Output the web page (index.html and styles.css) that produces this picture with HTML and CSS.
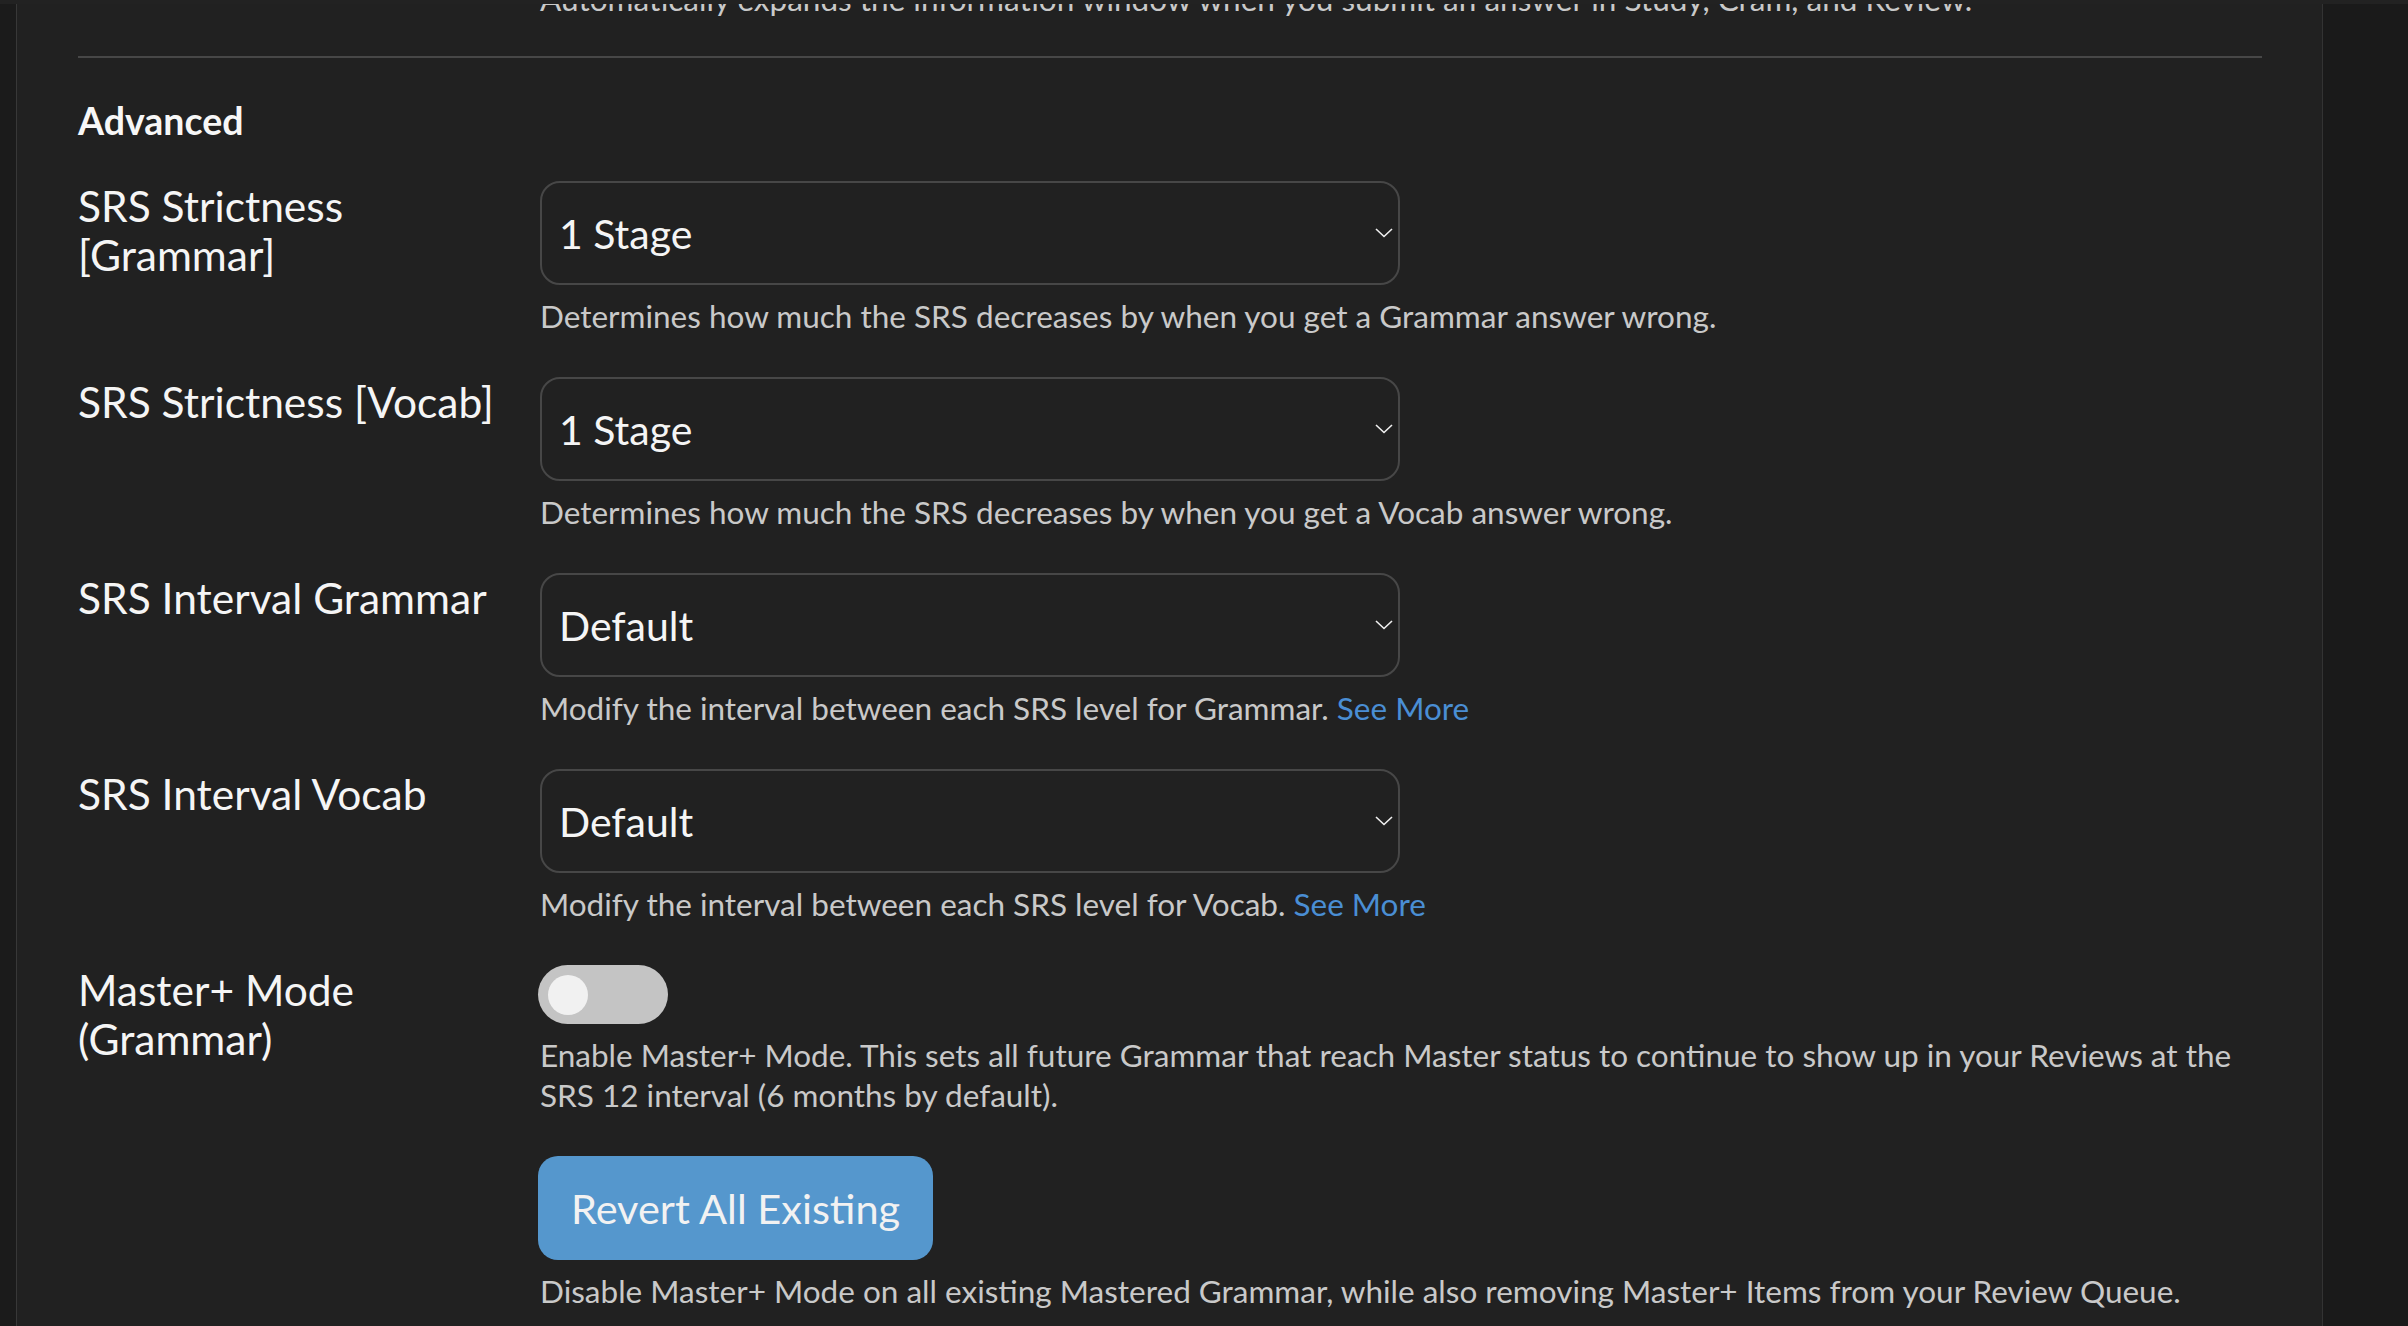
FILE: index.html
```html
<!DOCTYPE html>
<html lang="en">
<head>
<meta charset="utf-8">
<title>Settings – Advanced</title>
<link rel="stylesheet" href="styles.css">
</head>
<body>
<div class="topbar"></div>
<div class="layout">
  <div class="gutter-left"></div>
  <main class="panel">
    <div class="row intro">
      <div class="label"></div>
      <div class="value">
        <p class="desc">Automatically expands the information window when you submit an answer in Study, Cram, and Review.</p>
      </div>
    </div>
    <hr class="divider">
    <h3 class="section-title">Advanced</h3>

    <div class="row">
      <div class="label">SRS Strictness [Grammar]</div>
      <div class="value">
        <div class="select-wrap">
          <select class="select"><option>1 Stage</option></select>
          <svg class="chev" viewBox="0 0 18 10" width="18" height="10"><polyline points="1,1 9,8.5 17,1"/></svg>
        </div>
        <p class="desc">Determines how much the SRS decreases by when you get a Grammar answer wrong.</p>
      </div>
    </div>

    <div class="row">
      <div class="label">SRS Strictness [Vocab]</div>
      <div class="value">
        <div class="select-wrap">
          <select class="select"><option>1 Stage</option></select>
          <svg class="chev" viewBox="0 0 18 10" width="18" height="10"><polyline points="1,1 9,8.5 17,1"/></svg>
        </div>
        <p class="desc">Determines how much the SRS decreases by when you get a Vocab answer wrong.</p>
      </div>
    </div>

    <div class="row">
      <div class="label">SRS Interval Grammar</div>
      <div class="value">
        <div class="select-wrap">
          <select class="select"><option>Default</option></select>
          <svg class="chev" viewBox="0 0 18 10" width="18" height="10"><polyline points="1,1 9,8.5 17,1"/></svg>
        </div>
        <p class="desc">Modify the interval between each SRS level for Grammar. <a class="link" href="#">See More</a></p>
      </div>
    </div>

    <div class="row">
      <div class="label">SRS Interval Vocab</div>
      <div class="value">
        <div class="select-wrap">
          <select class="select"><option>Default</option></select>
          <svg class="chev" viewBox="0 0 18 10" width="18" height="10"><polyline points="1,1 9,8.5 17,1"/></svg>
        </div>
        <p class="desc">Modify the interval between each SRS level for Vocab. <a class="link" href="#">See More</a></p>
      </div>
    </div>

    <div class="row">
      <div class="label">Master+ Mode (Grammar)</div>
      <div class="value">
        <div class="toggle"><span class="knob"></span></div>
        <p class="desc">Enable Master+ Mode. This sets all future Grammar that reach Master status to continue to show up in your Reviews at the SRS 12 interval (6 months by default).</p>
        <button class="btn" type="button">Revert All Existing</button>
        <p class="desc">Disable Master+ Mode on all existing Mastered Grammar, while also removing Master+ Items from your Review Queue.</p>
      </div>
    </div>
  </main>
  <div class="gutter-right"></div>
</div>
</body>
</html>
```

FILE: styles.css
```css
html, body {
  margin: 0;
  padding: 0;
  height: 100%;
  overflow: hidden;
  background: #1b1b1b;
  font-family: Lato, "Liberation Sans", sans-serif;
  color: #f3f3f3;
}

.topbar {
  height: 4px;
  background: #222222;
}

.layout {
  display: flex;
  height: calc(100% - 4px);
}

.gutter-left {
  width: 16px;
  flex: none;
  background: #1b1b1b;
  border-right: 1px solid #383838;
}

.panel {
  width: 2184px;
  flex: none;
  background: #212121;
  border-right: 1px solid #333333;
  padding: 0 60px 0 61px;
  overflow: hidden;
}

.gutter-right {
  flex: 1;
  background: #1a1a1a;
}

.row {
  display: grid;
  grid-template-columns: 440px 1fr;
  column-gap: 22px;
  margin-bottom: 41px;
}

.row.intro {
  margin-top: -25px;
  margin-bottom: 0;
}

.label {
  font-size: 42.5px;
  line-height: 49px;
  color: #f5f5f5;
}

.value {
  display: flex;
  flex-direction: column;
  align-items: flex-start;
}

.desc {
  margin: 11px 0 0;
  font-size: 31.5px;
  line-height: 40px;
  color: #c9c9c9;
}

.row.intro .desc {
  margin-top: 0;
}

.link {
  color: #4a8ed4;
  text-decoration: none;
}

.divider {
  margin: 37px 0 0;
  border: 0;
  height: 2px;
  background: #474747;
}

.section-title {
  margin: 41px 0 38px;
  font-size: 37.5px;
  line-height: 44px;
  font-weight: 700;
  color: #f7f7f7;
}

.select-wrap {
  position: relative;
  width: 860px;
  height: 104px;
}

.select {
  appearance: none;
  -webkit-appearance: none;
  width: 100%;
  height: 100%;
  box-sizing: border-box;
  border: 2px solid #474747;
  border-radius: 20px;
  background: #212121;
  color: #f5f5f5;
  font-family: Lato, "Liberation Sans", sans-serif;
  font-size: 41px;
  padding: 0 50px 0 17px;
  outline: none;
}

.chev {
  position: absolute;
  right: 7px;
  top: 47px;
  fill: none;
  stroke: #f0f0f0;
  stroke-width: 1.6;
}

.toggle {
  width: 130px;
  height: 59px;
  margin-left: -2px;
  border-radius: 30px;
  background: #c4c4c4;
  display: flex;
  align-items: center;
  padding-left: 10px;
  box-sizing: border-box;
}

.knob {
  width: 40px;
  height: 40px;
  border-radius: 50%;
  background: #f1f1f1;
}

.btn {
  margin-top: 41px;
  margin-left: -2px;
  height: 104px;
  padding: 0 33px;
  border: 0;
  border-radius: 20px;
  background: #5597cd;
  color: #f2f2f2;
  font-family: Lato, "Liberation Sans", sans-serif;
  font-size: 41.5px;
}
```
